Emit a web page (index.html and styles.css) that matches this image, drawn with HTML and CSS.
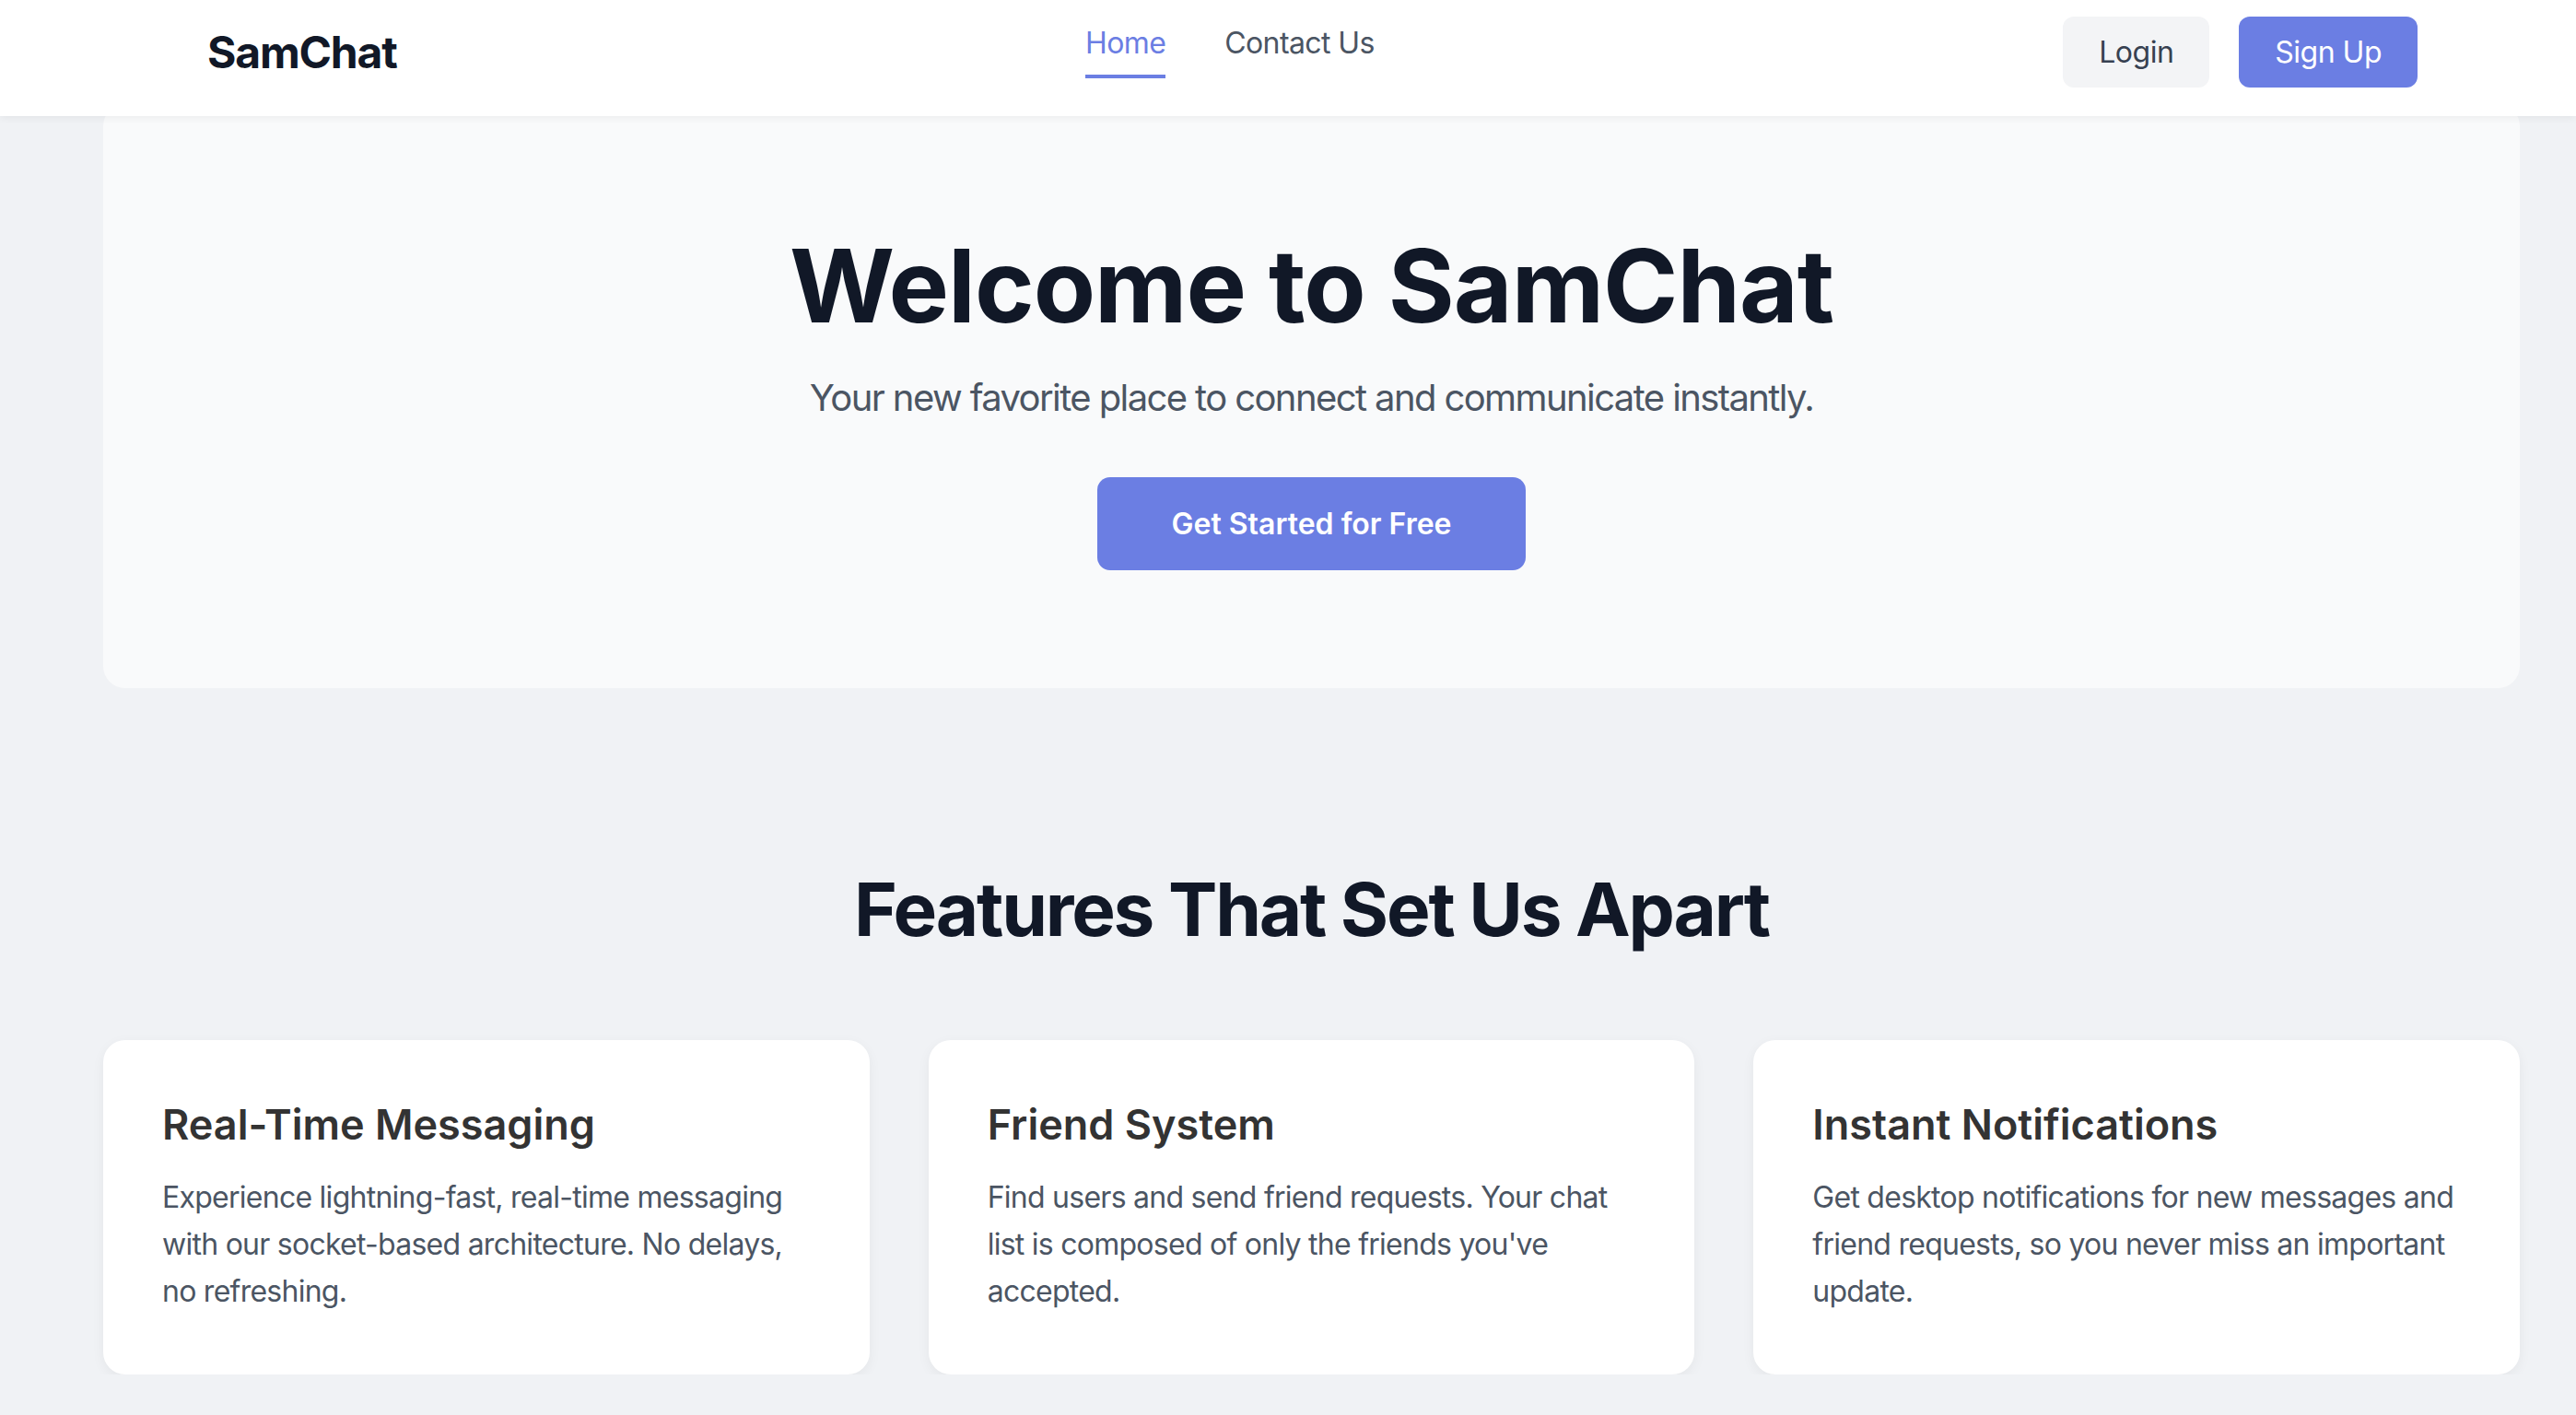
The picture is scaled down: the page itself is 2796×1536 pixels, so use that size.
FILE: index.html
```html
<!DOCTYPE html>
<html lang="en">
<head>
<meta charset="utf-8">
<title>SamChat</title>
<link rel="stylesheet" href="styles.css">
</head>
<body>
<header class="navbar">
  <div class="nav-inner">
    <div class="logo">SamChat</div>
    <nav class="nav-links">
      <a class="nav-link active" href="#">Home</a>
      <a class="nav-link" href="#">Contact Us</a>
    </nav>
    <div class="nav-actions">
      <a class="btn btn-light" href="#">Login</a>
      <a class="btn btn-primary" href="#">Sign Up</a>
    </div>
  </div>
</header>
<main class="main">
  <section class="hero">
    <h1 class="hero-title">Welcome to SamChat</h1>
    <p class="hero-sub">Your new favorite place to connect and communicate instantly.</p>
    <a class="btn-cta" href="#">Get Started for Free</a>
  </section>
  <section class="features">
    <h2 class="features-title">Features That Set Us Apart</h2>
    <div class="feature-grid">
      <div class="card">
        <h3 class="card-title">Real-Time Messaging</h3>
        <p class="card-text">Experience lightning-fast, real-time messaging with our socket-based architecture. No delays, no refreshing.</p>
      </div>
      <div class="card">
        <h3 class="card-title">Friend System</h3>
        <p class="card-text">Find users and send friend requests. Your chat list is composed of only the friends you've accepted.</p>
      </div>
      <div class="card">
        <h3 class="card-title">Instant Notifications</h3>
        <p class="card-text">Get desktop notifications for new messages and friend requests, so you never miss an important update.</p>
      </div>
    </div>
  </section>
</main>
</body>
</html>
```
FILE: styles.css
```css
* { box-sizing: border-box; }
html, body { margin: 0; padding: 0; }
body {
  font-family: Inter, "Noto Sans", "Liberation Sans", sans-serif;
  background: #f0f2f5;
  color: #111827;
  overflow: hidden;
}
a { text-decoration: none; }

.navbar {
  position: relative;
  z-index: 10;
  height: 126px;
  background: #ffffff;
  box-shadow: 0 2px 8px rgba(0, 0, 0, 0.06);
}
.nav-inner {
  height: 112px;
  display: flex;
  align-items: center;
  justify-content: space-between;
  padding: 0 172px 0 225px;
}
.logo {
  font-size: 48px;
  font-weight: 700;
  color: #111827;
  letter-spacing: -1.2px;
}
.nav-links {
  display: flex;
  gap: 64px;
}
.nav-link {
  font-size: 32px;
  color: #4b5563;
  letter-spacing: -0.6px;
  padding-bottom: 15px;
  border-bottom: 4px solid transparent;
}
.nav-link.active {
  color: #6b7ee3;
  border-bottom-color: #6b7ee3;
}
.nav-actions {
  display: flex;
  gap: 32px;
}
.btn {
  display: block;
  font-size: 32px;
  letter-spacing: -0.5px;
  padding: 19px 39px;
  border-radius: 12px;
}
.btn-light { background: #f3f4f6; color: #374151; }
.btn-primary { background: #6b7ee3; color: #ffffff; }

.main {
  padding: 0 61px 0 112px;
}
.hero {
  margin-top: -13px;
  background: #f9fafb;
  border-radius: 24px;
  padding: 130px 0 128px;
  text-align: center;
}
.hero-title {
  margin: 0;
  font-size: 110px;
  font-weight: 700;
  color: #111827;
  letter-spacing: -1px;
  line-height: normal;
}
.hero-sub {
  margin: 30px 0 62px;
  font-size: 40px;
  letter-spacing: -1.6px;
  color: #4b5563;
}
.btn-cta {
  display: inline-block;
  background: #6b7ee3;
  color: #ffffff;
  font-size: 32px;
  font-weight: 600;
  padding: 31px 81px;
  border-radius: 14px;
}

.features {
  padding-top: 191px;
}
.features-title {
  margin: 0 0 94px;
  text-align: center;
  font-size: 80px;
  font-weight: 700;
  color: #111827;
  letter-spacing: -2.2px;
  line-height: normal;
}
.feature-grid {
  display: grid;
  grid-template-columns: repeat(3, 1fr);
  gap: 64px;
}
.card {
  background: #ffffff;
  border-radius: 24px;
  padding: 64px;
  box-shadow: 0 4px 14px rgba(0, 0, 0, 0.05);
}
.card-title {
  margin: 0 0 26px;
  font-size: 45px;
  font-weight: 600;
  color: #333333;
  line-height: normal;
  letter-spacing: 0;
}
.card-text {
  margin: 0;
  font-size: 32px;
  line-height: 51.2px;
  letter-spacing: -0.74px;
  color: #4b5563;
}
```
